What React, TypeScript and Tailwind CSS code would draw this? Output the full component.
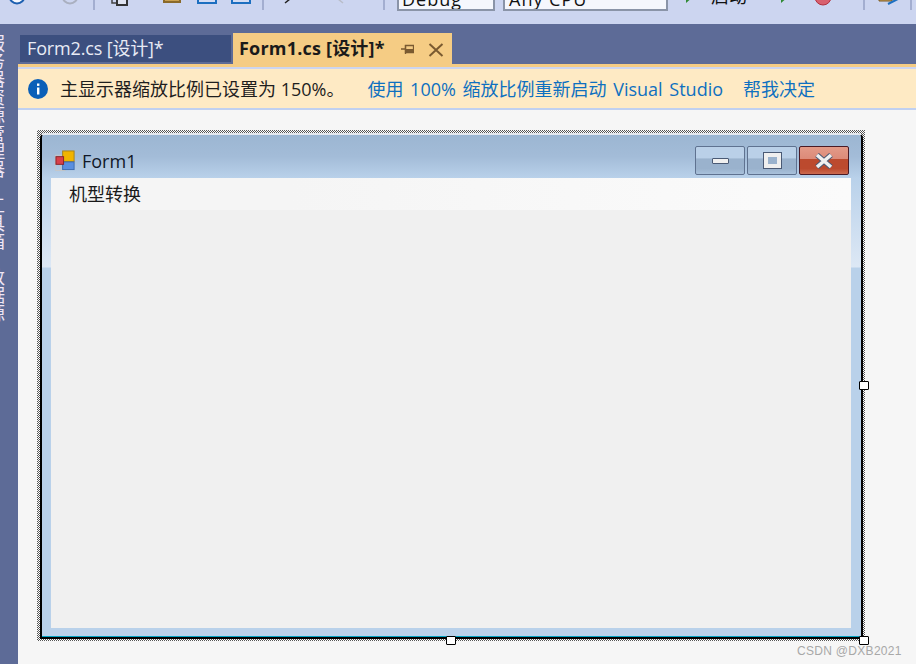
const cjk = "font-['Open_Sans','Noto_Sans_CJK_SC',sans-serif]";

function Handle({ className }: { className: string }) {
  return <div className={`absolute w-[10px] h-[9px] bg-white border border-black rounded-[1px] ${className}`} />;
}

function Toolbar() {
  return (
    <div className={`h-6 shrink-0 bg-[#ccd5f0] flex items-start overflow-hidden ${cjk}`}>
      <svg width="18" height="18" viewBox="0 0 18 18" className="ml-[8px] -mt-[13px]">
        <circle cx="9" cy="9" r="7.5" fill="#f5f7fd" stroke="#1c5fb0" strokeWidth="2" />
      </svg>
      <svg width="18" height="18" viewBox="0 0 18 18" className="ml-[35px] -mt-[13px]">
        <circle cx="9" cy="9" r="7.5" fill="none" stroke="#aab0c0" strokeWidth="2" />
      </svg>
      <div className="ml-[14px] w-[2px] h-[10px] bg-[#a3aed0]" />
      <svg width="20" height="20" viewBox="0 0 20 20" className="ml-[16px] -mt-[14px]">
        <path d="M1 1h10v16H1z" fill="none" stroke="#444" strokeWidth="1.5" />
        <path d="M6 6h10v13H6z" fill="#dfe3f0" stroke="#333" strokeWidth="2" />
      </svg>
      <svg width="18" height="16" viewBox="0 0 18 16" className="ml-[32px] -mt-[13px]">
        <path d="M1 1h16v14H1z" fill="#c9a050" stroke="#8a6a2a" strokeWidth="2" />
      </svg>
      <svg width="20" height="16" viewBox="0 0 20 16" className="ml-[16px] -mt-[12px]">
        <path d="M1 1h18v14H1z" fill="#d3dcf3" stroke="#1c6fc0" strokeWidth="2" />
      </svg>
      <svg width="22" height="16" viewBox="0 0 22 16" className="ml-[14px] -mt-[12px]">
        <path d="M1 1h18v14H1z" fill="#d3dcf3" stroke="#1c6fc0" strokeWidth="2" />
        <path d="M21 1v11" fill="none" stroke="#1c6fc0" strokeWidth="1.5" />
      </svg>
      <div className="ml-[9px] w-[2px] h-[10px] bg-[#a3aed0]" />
      <svg width="10" height="10" viewBox="0 0 10 10" className="ml-[19px] -mt-[5px]">
        <path d="M2 0l5 4-5 4" fill="none" stroke="#222" strokeWidth="1.5" />
      </svg>
      <svg width="10" height="10" viewBox="0 0 10 10" className="ml-[43px] -mt-[5px]">
        <path d="M7 0L2 4l5 4" fill="none" stroke="#b8bdc9" strokeWidth="1.5" />
      </svg>
      <div className="ml-[37px] w-[2px] h-[10px] bg-[#a3aed0]" />
      <div className="ml-[12px] w-[98px] h-[11px] bg-[#f5f7fd] border-2 border-t-0 border-[#8a94a8] overflow-hidden pl-[3px]">
        <div className="-mt-[13px] text-[18px] leading-[24px] tracking-[1px] text-[#111]">Debug</div>
      </div>
      <div className="ml-[8px] w-[165px] h-[11px] bg-[#f5f7fd] border-2 border-t-0 border-[#8a94a8] overflow-hidden pl-[4px]">
        <div className="-mt-[13px] text-[18px] leading-[24px] tracking-[1px] text-[#111]">Any CPU</div>
      </div>
      <svg width="12" height="12" viewBox="0 0 12 12" className="ml-[16px] -mt-[9px]">
        <path d="M2 0l7 6-7 6z" fill="#2f8a34" />
      </svg>
      <div className="ml-[15px] -mt-[16px] text-[18px] leading-[24px] text-[#111]">启动</div>
      <svg width="12" height="12" viewBox="0 0 12 12" className="ml-[32px] -mt-[9px]">
        <path d="M2 0l7 6-7 6z" fill="#2f8a34" />
      </svg>
      <svg width="18" height="18" viewBox="0 0 18 18" className="ml-[23px] -mt-[12px]">
        <circle cx="9" cy="9" r="8" fill="#d8606e" stroke="#b03040" />
      </svg>
      <div className="ml-[31px] w-[2px] h-[10px] bg-[#a3aed0]" />
      <svg width="22" height="14" viewBox="0 0 22 14" className="ml-[13px] -mt-[9px]">
        <path d="M1 1h13v9H1z" fill="#c9a05a" stroke="#7a5a20" />
        <path d="M10 13l10-5" stroke="#1c6fc0" strokeWidth="2" />
      </svg>
      <div className="ml-[10px] w-[2px] h-[10px] bg-[#a3aed0]" />
    </div>
  );
}

function Sidebar() {
  return (
    <div className={`w-[18px] shrink-0 bg-[#5d6b97] overflow-hidden flex flex-col items-start text-[18px] leading-[18px] text-[#f0e6f5] ${cjk}`}>
      <div className="w-[18px] -ml-[14px] mt-[10px] [writing-mode:vertical-rl] h-[144px]">服务器资源管理器</div>
      <div className="w-[18px] -ml-[14px] mt-[18px] [writing-mode:vertical-rl] h-[54px]">工具箱</div>
      <div className="w-[18px] -ml-[14px] mt-[18px] [writing-mode:vertical-rl] h-[54px]">数据源</div>
    </div>
  );
}

function Tabs() {
  return (
    <div className={`h-10 shrink-0 bg-[#5d6b97] flex items-end pl-[2px] ${cjk}`}>
      <div className="w-[211px] h-[27px] mb-[2px] bg-[#3c4f7f] pl-[7px] flex items-center text-[18px] tracking-[-0.15px] text-[#e8ebf5] whitespace-nowrap">
        Form2.cs [设计]*
      </div>
      <div className="ml-[2px] w-[219px] h-[31px] bg-[#f5cc84] pl-[6px] flex items-center text-[18px] tracking-[0.2px] font-bold text-[#1a1a1a] whitespace-nowrap">
        Form1.cs [设计]*
        <svg width="13" height="11" viewBox="0 0 13 11" className="ml-[16px] mt-[2px]">
          <path d="M0 5h4.5M4.5 1v9" fill="none" stroke="#7a5a30" strokeWidth="1.3" />
          <path d="M4.5 1.5h8v7h-8z" fill="none" stroke="#7a5a30" strokeWidth="1.3" />
          <path d="M4.5 5h8v3.5h-8z" fill="#7a5a30" />
        </svg>
        <svg width="16" height="14" viewBox="0 0 16 14" className="ml-[14px] mt-[2px]">
          <path d="M1.5 1l13 12M14.5 1l-13 12" stroke="#7a5a30" strokeWidth="2" />
        </svg>
      </div>
    </div>
  );
}

function InfoBar() {
  return (
    <>
      <div className="h-[3px] shrink-0 bg-[#f5cc84]" />
      <div className="h-[2px] shrink-0 bg-[#ccd5f0]" />
      <div className={`h-[39px] shrink-0 bg-[#feeac4] flex items-center pl-[10px] text-[18px] whitespace-nowrap ${cjk}`}>
        <svg width="20" height="20" viewBox="0 0 20 20">
          <circle cx="10" cy="10" r="10" fill="#0a5fb8" />
          <rect x="9" y="8.5" width="2.4" height="7" fill="#fff" />
          <rect x="9" y="4.5" width="2.4" height="2.4" fill="#fff" />
        </svg>
        <span className="ml-[12px] mt-[1px] text-[#1e1e1e]">主显示器缩放比例已设置为 150%。</span>
        <span className="ml-[23px] mt-[1px] text-[#0e70c0] [word-spacing:2px]">使用 100% 缩放比例重新启动 Visual Studio</span>
        <span className="ml-[20px] mt-[1px] text-[#0e70c0]">帮我决定</span>
      </div>
      <div className="h-[2px] shrink-0 bg-[#c0d0f0]" />
    </>
  );
}

function WinButton({ close, children }: { close?: boolean; children: React.ReactNode }) {
  return (
    <div className={`w-[50px] h-[29px] rounded-[2px] border flex items-center justify-center ${close
      ? 'border-[#4a1a25] bg-[linear-gradient(to_bottom,#e39a88_0,#dc8a78_45%,#bc4a2e_46%,#bc4a2e_80%,#cc6a50_100%)]'
      : 'border-[#5f7290] bg-[linear-gradient(to_bottom,#bad0e8_0,#bad0e8_42%,#9ab2cd_43%,#9ab2cd_80%,#a9c1db_100%)]'}`}>
      {children}
    </div>
  );
}

function FormWindow() {
  return (
    <div className={`flex-1 flex flex-col bg-[#b9d1ea] border-2 border-l-black border-t-[#e4e8ee] border-r-black border-b-black rounded-tl-[5px] rounded-tr-[5px] ${cjk}`}>
      <div className="h-[43px] shrink-0 flex items-center pt-[8px] pl-[13px] pr-[12px] bg-[linear-gradient(to_bottom,#9cb6d2_0,#a3bcd8_50%,#b9d1ea_100%)] rounded-t-[3px]">
        <svg width="21" height="21" viewBox="0 0 22 22">
          <path d="M0.5 5.5h10v16h-10z M0.5 13.5h10 M5.5 5.5v16" fill="none" stroke="#c6c6c6" />
          <rect x="8" y="1" width="12" height="11" fill="#f1b400" stroke="#a8821a" />
          <rect x="8" y="12.5" width="12" height="8" fill="#5a8fe0" stroke="#3d6cb0" />
          <rect x="1" y="7" width="8" height="8" fill="#d8404a" stroke="#8a2026" />
        </svg>
        <span className="ml-[6px] mt-[1px] text-[18px] text-[#101828]">Form1</span>
        <div className="ml-auto flex gap-[2px]">
          <WinButton>
            <div className="w-[17px] h-[6px] bg-[#f0f0f0] border border-[#4a5a75] rounded-[1px]" />
          </WinButton>
          <WinButton>
            <div className="w-[17px] h-[15px] bg-[#9ab2cd] border-[4px] border-[#efefef] outline outline-1 outline-[#4a5a75]" />
          </WinButton>
          <WinButton close>
            <svg width="20" height="16" viewBox="0 0 20 16">
              <path d="M3 2l14 12M17 2L3 14" stroke="#4a5a75" strokeWidth="5.5" />
              <path d="M3 2l14 12M17 2L3 14" stroke="#f0f0f0" strokeWidth="3.6" />
            </svg>
          </WinButton>
        </div>
      </div>
      <div className="flex-1 flex min-h-0">
        <div className="w-[9px] bg-[linear-gradient(to_bottom,#b9d1ea_0,#dde8f5_89px,#b9d1ea_90px)]" />
        <div className="flex-1 bg-[#f0f0f0]">
          <div className="h-8 bg-[linear-gradient(to_right,#f5f5f5_0,#f5f5f5_30%,#fbfbfb_100%)] pl-[18px] flex items-center text-[18px] text-[#1a1a1a]">
            机型转换
          </div>
        </div>
        <div className="w-[10px] bg-[linear-gradient(to_bottom,#b9d1ea_0,#dde8f5_89px,#b9d1ea_90px)]" />
      </div>
      <div className="h-[9px] shrink-0 border-b border-[#00a0c0]" />
    </div>
  );
}

export default function App() {
  return (
    <div className="relative w-[916px] h-[664px] overflow-hidden flex flex-col bg-[#f6f6f6]">
      <Toolbar />
      <div className="flex-1 flex min-h-0">
        <Sidebar />
        <div className="flex-1 flex flex-col min-w-0">
          <Tabs />
          <InfoBar />
          <div className="flex-1 pl-[19px] pt-[20px]">
            <div className="relative w-[828px] h-[511px] flex pl-[3px] pt-[3px] pr-[2px] pb-[2px] bg-[repeating-conic-gradient(#555_0_25%,#fff_0_50%)] bg-[length:2px_2px]">
              <FormWindow />
              <Handle className="left-[822px] top-[251px]" />
              <Handle className="left-[409px] top-[506px]" />
              <Handle className="left-[822px] top-[506px]" />
            </div>
          </div>
        </div>
      </div>
      <div className="absolute left-[797px] top-[642px] text-[12px] tracking-[0.3px] text-[#a8a8a8] font-['Liberation_Sans',sans-serif]">CSDN @DXB2021</div>
    </div>
  );
}
